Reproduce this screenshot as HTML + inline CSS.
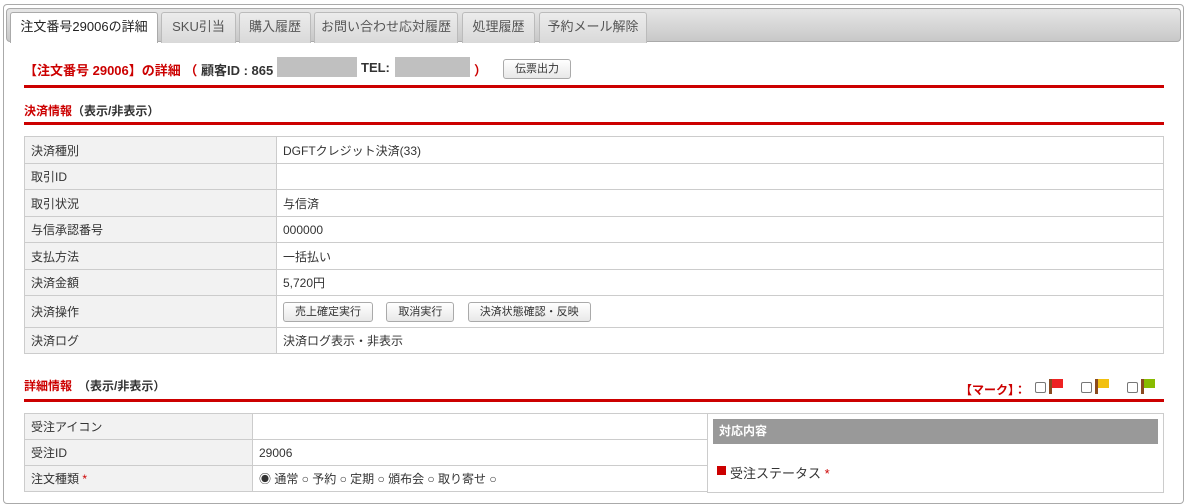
<!DOCTYPE html>
<html><head><meta charset="utf-8"><style>
*{box-sizing:border-box;margin:0;padding:0}
body{width:1197px;height:478px;overflow:hidden;background:#fff;font-family:"Liberation Sans","Noto Sans CJK JP",sans-serif;font-size:12px;color:#333}
.outer{position:absolute;left:3px;top:4px;width:1181px;height:500px;border:1px solid #aaa;border-radius:4px}
.tabbar{position:absolute;left:6px;top:8px;width:1175px;height:34px;border:1px solid #aaa;border-radius:4px;background:linear-gradient(#e6e6e6,#c8c8c8)}
.tab{position:absolute;top:12px;height:31px;border:1px solid #bbb;border-bottom:none;border-radius:3px 3px 0 0;background:linear-gradient(#ececec,#d9d9d9);color:#555;font-size:13px;text-align:center;line-height:28px}
.tab.act{background:#fff;color:#222;height:31px;border-color:#aaa}
.abs{position:absolute}
.red{color:#c00}
.rline{position:absolute;left:24px;width:1140px;height:3px;background:#c00}
.btn{display:inline-block;border:1px solid #aaa;border-radius:3px;background:linear-gradient(#fff,#e8e8e8);font-size:11px;color:#333;padding:0 11px;height:20px;line-height:18px}
table{border-collapse:collapse;position:absolute}
td{border:1px solid #ccc;padding:0 6px;font-size:12px;color:#333}
td.l{background:#f2f2f2}
</style></head><body>
<div class="outer"></div>
<div class="tabbar"></div>
<div class="tab act" style="left:10px;width:148px">注文番号29006の詳細</div>
<div class="tab" style="left:161px;width:75px">SKU引当</div>
<div class="tab" style="left:239px;width:72px">購入履歴</div>
<div class="tab" style="left:314px;width:144px">お問い合わせ応対履歴</div>
<div class="tab" style="left:462px;width:73px">処理履歴</div>
<div class="tab" style="left:539px;width:108px">予約メール解除</div>

<div class="abs" style="left:24px;top:60px;font-weight:bold;font-size:13px;white-space:nowrap"><span class="red">【注文番号 29006】の詳細 （</span> 顧客ID : 865</div>
<div class="abs" style="left:277px;top:57px;width:80px;height:20px;background:#c0c0c0"></div>
<div class="abs" style="left:361px;top:60px;font-weight:bold;font-size:13px">TEL:</div>
<div class="abs" style="left:395px;top:57px;width:75px;height:20px;background:#c0c0c0"></div>
<div class="abs red" style="left:474px;top:60px;font-weight:bold;font-size:13px">）</div>
<div class="abs btn" style="left:503px;top:59px">伝票出力</div>
<div class="rline" style="top:85px"></div>
<div class="abs" style="left:24px;top:102px;font-weight:bold"><span class="red">決済情報</span>（表示/非表示）</div>
<div class="rline" style="top:122px"></div>

<table style="left:24px;top:136px;width:1140px">
<tr style="height:27px"><td class="l" style="width:252px">決済種別</td><td>DGFTクレジット決済(33)</td></tr>
<tr style="height:26px"><td class="l">取引ID</td><td></td></tr>
<tr style="height:27px"><td class="l">取引状況</td><td>与信済</td></tr>
<tr style="height:26px"><td class="l">与信承認番号</td><td>000000</td></tr>
<tr style="height:27px"><td class="l">支払方法</td><td>一括払い</td></tr>
<tr style="height:26px"><td class="l">決済金額</td><td>5,720円</td></tr>
<tr style="height:32px"><td class="l">決済操作</td><td><span class="btn">売上確定実行</span> &nbsp;&nbsp; <span class="btn">取消実行</span> &nbsp;&nbsp; <span class="btn">決済状態確認・反映</span></td></tr>
<tr style="height:26px"><td class="l">決済ログ</td><td>決済ログ表示・非表示</td></tr>
</table>

<div class="abs" style="left:24px;top:377px;font-weight:bold"><span class="red">詳細情報</span>　（表示/非表示）</div>
<div class="abs" style="left:960px;top:381px;font-weight:bold;color:#c00">【マーク】：</div>
<div class="abs" style="left:1035px;top:382px;width:11px;height:11px;border:1px solid #777;border-radius:2px"></div>
<div class="abs" style="left:1049px;top:379px;width:3px;height:15px;background:#8a4a20"></div><div class="abs" style="left:1052px;top:379px;width:11px;height:9px;background:#e22"></div>
<div class="abs" style="left:1081px;top:382px;width:11px;height:11px;border:1px solid #777;border-radius:2px"></div>
<div class="abs" style="left:1095px;top:379px;width:3px;height:15px;background:#8a4a20"></div><div class="abs" style="left:1098px;top:379px;width:11px;height:9px;background:#f2c010"></div>
<div class="abs" style="left:1127px;top:382px;width:11px;height:11px;border:1px solid #777;border-radius:2px"></div>
<div class="abs" style="left:1141px;top:379px;width:3px;height:15px;background:#8a4a20"></div><div class="abs" style="left:1144px;top:379px;width:11px;height:9px;background:#8b0"></div>
<div class="rline" style="top:399px"></div>

<table style="left:24px;top:413px;width:684px">
<tr style="height:26px"><td class="l" style="width:228px">受注アイコン</td><td></td></tr>
<tr style="height:26px"><td class="l">受注ID</td><td>29006</td></tr>
<tr style="height:26px"><td class="l">注文種類 <span class="red">*</span></td><td>◉ 通常 ○ 予約 ○ 定期 ○ 頒布会 ○ 取り寄せ ○</td></tr>
</table>
<div class="abs" style="left:707px;top:413px;width:457px;height:80px;border:1px solid #ccc"></div>
<div class="abs" style="left:713px;top:419px;width:445px;height:25px;background:#999;color:#fff;font-weight:bold;padding-left:6px;line-height:24px">対応内容</div>
<div class="abs" style="left:717px;top:466px;width:9px;height:9px;background:#c00"></div>
<div class="abs" style="left:730px;top:463px;font-size:13px">受注ステータス <span class="red">*</span></div>
</body></html>
